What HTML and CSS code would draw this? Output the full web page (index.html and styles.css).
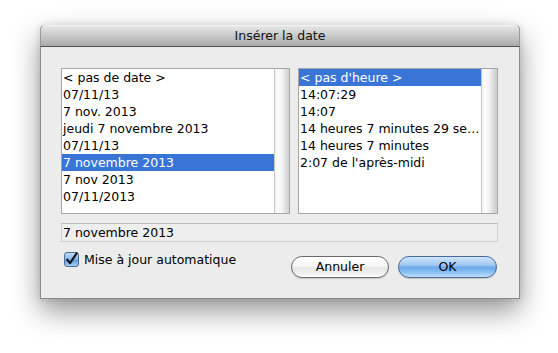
FILE: index.html
```html
<!DOCTYPE html>
<html lang="fr">
<head>
<meta charset="utf-8">
<title>Insérer la date</title>
<link rel="stylesheet" href="styles.css">
</head>
<body>
<div class="desk">
  <div class="window">
    <div class="titlebar">Insérer la date</div>
    <div class="content">
      <div class="lists">
        <div class="list list-date">
          <ul class="items">
            <li>&lt; pas de date &gt;</li>
            <li>07/11/13</li>
            <li>7 nov. 2013</li>
            <li>jeudi 7 novembre 2013</li>
            <li>07/11/13</li>
            <li class="selected">7 novembre 2013</li>
            <li>7 nov 2013</li>
            <li>07/11/2013</li>
          </ul>
          <div class="scroll"></div>
        </div>
        <div class="list list-time">
          <ul class="items">
            <li class="selected">&lt; pas d'heure &gt;</li>
            <li>14:07:29</li>
            <li>14:07</li>
            <li>14 heures 7 minutes 29 se…</li>
            <li>14 heures 7 minutes</li>
            <li>2:07 de l'après-midi</li>
          </ul>
          <div class="scroll"></div>
        </div>
      </div>
      <div class="field">7 novembre 2013</div>
      <div class="bottom">
        <label class="check">
          <span class="box">
            <svg width="15" height="15" viewBox="0 0 15 15">
              <defs>
                <linearGradient id="cb" x1="0" y1="0" x2="0" y2="1">
                  <stop offset="0" stop-color="#c9e0f7"/>
                  <stop offset="0.5" stop-color="#7fb3e8"/>
                  <stop offset="0.55" stop-color="#5f9de0"/>
                  <stop offset="1" stop-color="#a9d2f6"/>
                </linearGradient>
              </defs>
              <rect x="0.5" y="0.5" width="14" height="14" rx="2.5" fill="url(#cb)" stroke="#4d6c95"/>
              <path d="M3.2 7.6 L6 11.2 L12.6 1.4" fill="none" stroke="#111" stroke-width="2.1" stroke-linecap="round" stroke-linejoin="round"/>
            </svg>
          </span>
          <span class="label">Mise à jour automatique</span>
        </label>
        <div class="buttons">
          <button class="btn">Annuler</button>
          <button class="btn default">OK</button>
        </div>
      </div>
    </div>
  </div>
</div>
</body>
</html>
```

FILE: styles.css
```css
html, body {
  margin: 0;
  padding: 0;
  background: #ffffff;
}

body {
  font-family: "DejaVu Sans", "Liberation Sans", sans-serif;
  font-size: 12.5px;
  color: #000;
}

.desk {
  padding: 25px 0 0 40px;
  min-height: 353px;
  box-sizing: border-box;
}

.window {
  width: 480px;
  box-sizing: border-box;
  background: #ececec;
  border: 1px solid #8a8a8a;
  border-top: none;
  border-radius: 5px 5px 0 0;
  box-shadow: 0 12px 28px rgba(0, 0, 0, 0.42), 0 0 6px rgba(0, 0, 0, 0.12);
}

.titlebar {
  height: 21px;
  line-height: 21px;
  text-align: center;
  color: #111;
  font-size: 12.5px;
  background: linear-gradient(to bottom, #e9e9e9 0%, #d3d3d3 35%, #b9b9b9 75%, #a8a8a8 100%);
  border-bottom: 1px solid #515151;
  border-radius: 5px 5px 0 0;
  box-shadow: inset 0 1px 0 #f4f4f4;
  margin: 0 -1px;
  border-left: 1px solid #9a9a9a;
  border-right: 1px solid #9a9a9a;
}

.content {
  padding: 21px 21px 20px 20px;
}

.lists {
  display: flex;
  gap: 8px;
}

.list {
  height: 146px;
  box-sizing: border-box;
  border: 1px solid #a6a6a6;
  background: #fff;
  display: flex;
}

.list-date { width: 229px; }
.list-time { width: 200px; }

.items {
  list-style: none;
  margin: 0;
  padding: 0;
  flex: 1;
  min-width: 0;
}

.items li {
  height: 17px;
  line-height: 17px;
  padding-left: 1px;
  white-space: nowrap;
  overflow: hidden;
}

.items li.selected {
  background: #3875d7;
  color: #fff;
}

.scroll {
  width: 15px;
  flex: none;
  background: linear-gradient(to right, #c8c8c8 0, #c8c8c8 1px, #f2f2f2 1px, #fdfdfd 4px, #f3f3f3 8px, #dedede 12px, #cfcfcf 15px);
}

.list-time .scroll {
  width: 16px;
}

.field {
  margin-top: 9px;
  height: 19px;
  box-sizing: border-box;
  line-height: 17px;
  padding-left: 1px;
  background: #eeeeee;
  border: 1px solid #cfcfcf;
  border-top-color: #bdbdbd;
}

.bottom {
  margin-top: 10px;
  display: flex;
  justify-content: space-between;
  align-items: flex-start;
  height: 26px;
}

.check {
  display: flex;
  align-items: center;
  margin-left: 3px;
  height: 15px;
}

.box {
  width: 15px;
  height: 15px;
  display: block;
}

.box svg {
  display: block;
}

.label {
  margin-left: 5px;
  line-height: 15px;
}

.buttons {
  display: flex;
  gap: 9px;
  margin-top: 4px;
  margin-right: 1px;
}

.btn {
  font-family: "DejaVu Sans", "Liberation Sans", sans-serif;
  font-size: 12.5px;
  height: 22px;
  width: 98px;
  padding: 0;
  line-height: 20px;
  border-radius: 11px;
  border: 1px solid #6a6a6a;
  color: #000;
  background: linear-gradient(to bottom, #ffffff 0%, #f7f7f7 45%, #e6e6e6 55%, #f2f2f2 85%, #ffffff 100%);
  box-shadow: 0 1px 1px rgba(0, 0, 0, 0.15);
}

.btn.default {
  width: 99px;
  border-color: #4a6a9a;
  background: linear-gradient(to bottom, #cfe5fa 0%, #9fc9f2 40%, #6eaaeb 52%, #86bff3 75%, #c0e2fc 100%);
}
```
